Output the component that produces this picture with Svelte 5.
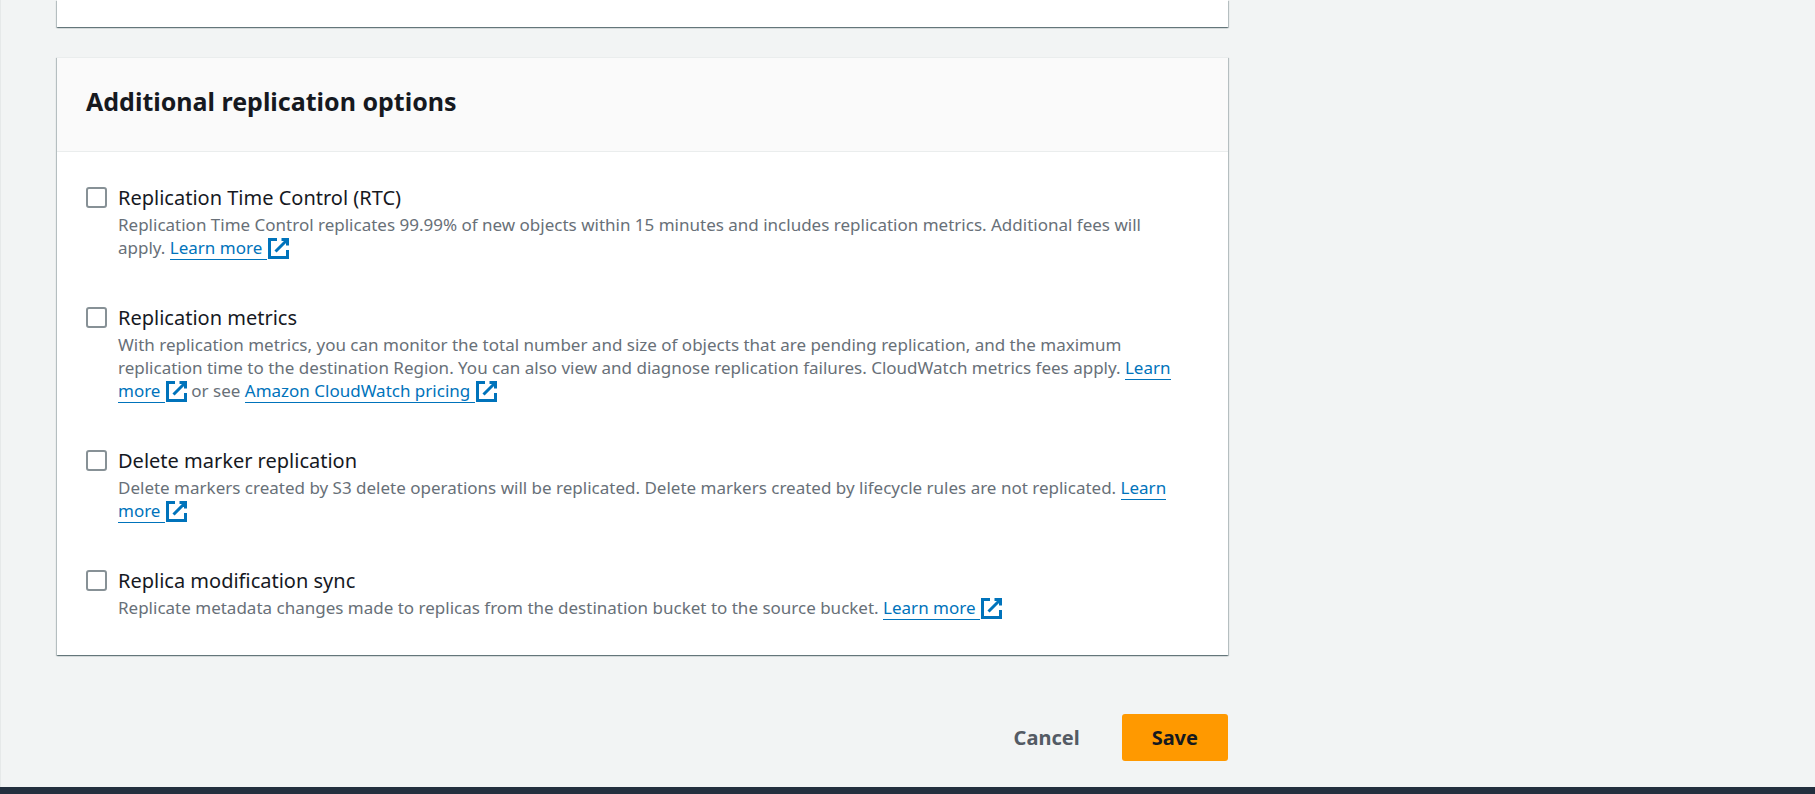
<script>
  const options = [
    {
      id: 'rtc',
      label: 'Replication Time Control (RTC)',
      parts: [
        { text: 'Replication Time Control replicates 99.99% of new objects within 15 minutes and includes replication metrics. Additional fees will apply. ' },
        { link: 'Learn more' }
      ]
    },
    {
      id: 'metrics',
      label: 'Replication metrics',
      parts: [
        { text: 'With replication metrics, you can monitor the total number and size of objects that are pending replication, and the maximum replication time to the destination Region. You can also view and diagnose replication failures. CloudWatch metrics fees apply. ' },
        { link: 'Learn more' },
        { text: ' or see ' },
        { link: 'Amazon CloudWatch pricing' }
      ]
    },
    {
      id: 'delete-marker',
      label: 'Delete marker replication',
      parts: [
        { text: 'Delete markers created by S3 delete operations will be replicated. Delete markers created by lifecycle rules are not replicated. ' },
        { link: 'Learn more' }
      ]
    },
    {
      id: 'replica-sync',
      label: 'Replica modification sync',
      parts: [
        { text: 'Replicate metadata changes made to replicas from the destination bucket to the source bucket. ' },
        { link: 'Learn more' }
      ]
    }
  ];
</script>

<div class="page">
  <main>
    <section class="card previous"></section>

    <section class="card">
      <header><h2>Additional replication options</h2></header>
      <div class="options">
        {#each options as option (option.id)}
          <div class="option">
            <input type="checkbox" id={option.id} aria-describedby="{option.id}-info" />
            <div class="copy">
              <label for={option.id}>{option.label}</label>
              <p id="{option.id}-info">{#each option.parts as part}{#if part.link}<a href="#{option.id}">{part.link}&nbsp;</a><svg class="external" viewBox="1 1 14 14" aria-hidden="true"><path d="M10 2h4v4M6 10l8-8M14 9.048V14H2V2h5" /></svg>{:else}{part.text}{/if}{/each}</p>
            </div>
          </div>
        {/each}
      </div>
    </section>

    <div class="actions">
      <button type="button" class="cancel">Cancel</button>
      <button type="submit" class="save">Save</button>
    </div>
  </main>
  <footer></footer>
</div>

<style>
  :global(body) {
    margin: 0;
    background: #f2f4f4;
  }
  .page {
    min-height: 100vh;
    display: flex;
    flex-direction: column;
    font-family: 'Noto Sans', 'Open Sans', sans-serif;
    color: #16191f;
  }
  main {
    flex: 1;
    box-sizing: border-box;
    width: 100%;
    max-width: 1284px;
    padding: 0 56px;
    border-left: 1px solid #e6e9e9;
  }
  .card {
    background: #fff;
    border-top: 1px solid #eaeded;
    box-shadow: 0 1px 1px 0 rgba(0, 28, 36, 0.35), 1px 1px 1px 0 rgba(0, 28, 36, 0.2), -1px 1px 1px 0 rgba(0, 28, 36, 0.2);
    margin-bottom: 30px;
  }
  .previous {
    height: 27px;
    border-top: 0;
  }
  header {
    background: #fafafa;
    border-bottom: 1px solid #eaeded;
    padding: 27px 29px 34px;
  }
  h2 {
    margin: 0;
    font-size: 25px;
    line-height: 32px;
    font-weight: 700;
  }
  .options {
    display: flex;
    flex-direction: column;
    gap: 45px;
    padding: 32px 40px 36px 29px;
  }
  .option {
    display: flex;
    align-items: flex-start;
    gap: 11px;
  }
  input {
    appearance: none;
    flex: none;
    box-sizing: border-box;
    width: 21px;
    height: 21px;
    margin: 3px 0 0;
    background: #fff;
    border: 2px solid #879196;
    border-radius: 3px;
  }
  input:checked {
    background: #0073bb;
    border-color: #0073bb;
  }
  label {
    display: block;
    font-size: 20px;
    line-height: 28px;
  }
  p {
    margin: 1px 0 0;
    font-size: 17px;
    line-height: 23px;
    color: #687078;
  }
  a {
    color: #0073bb;
    text-decoration: none;
    border-bottom: 1px solid #0073bb;
  }
  .external {
    width: 21px;
    height: 21px;
    margin: -2px 0 -2px 1px;
    vertical-align: -3px;
    fill: none;
    stroke: #0073bb;
    stroke-width: 2;
  }
  .actions {
    display: flex;
    justify-content: flex-end;
    gap: 12px;
    padding: 29px 0 26px;
  }
  button {
    height: 47px;
    padding: 0 30px;
    border: 0;
    border-radius: 3px;
    font: 700 20px/30px 'Noto Sans', 'Open Sans', sans-serif;
  }
  .cancel {
    background: none;
    color: #545b64;
  }
  .save {
    background: #ff9900;
    color: #16191f;
  }
  footer {
    height: 7px;
    background: #232f3e;
  }
</style>
